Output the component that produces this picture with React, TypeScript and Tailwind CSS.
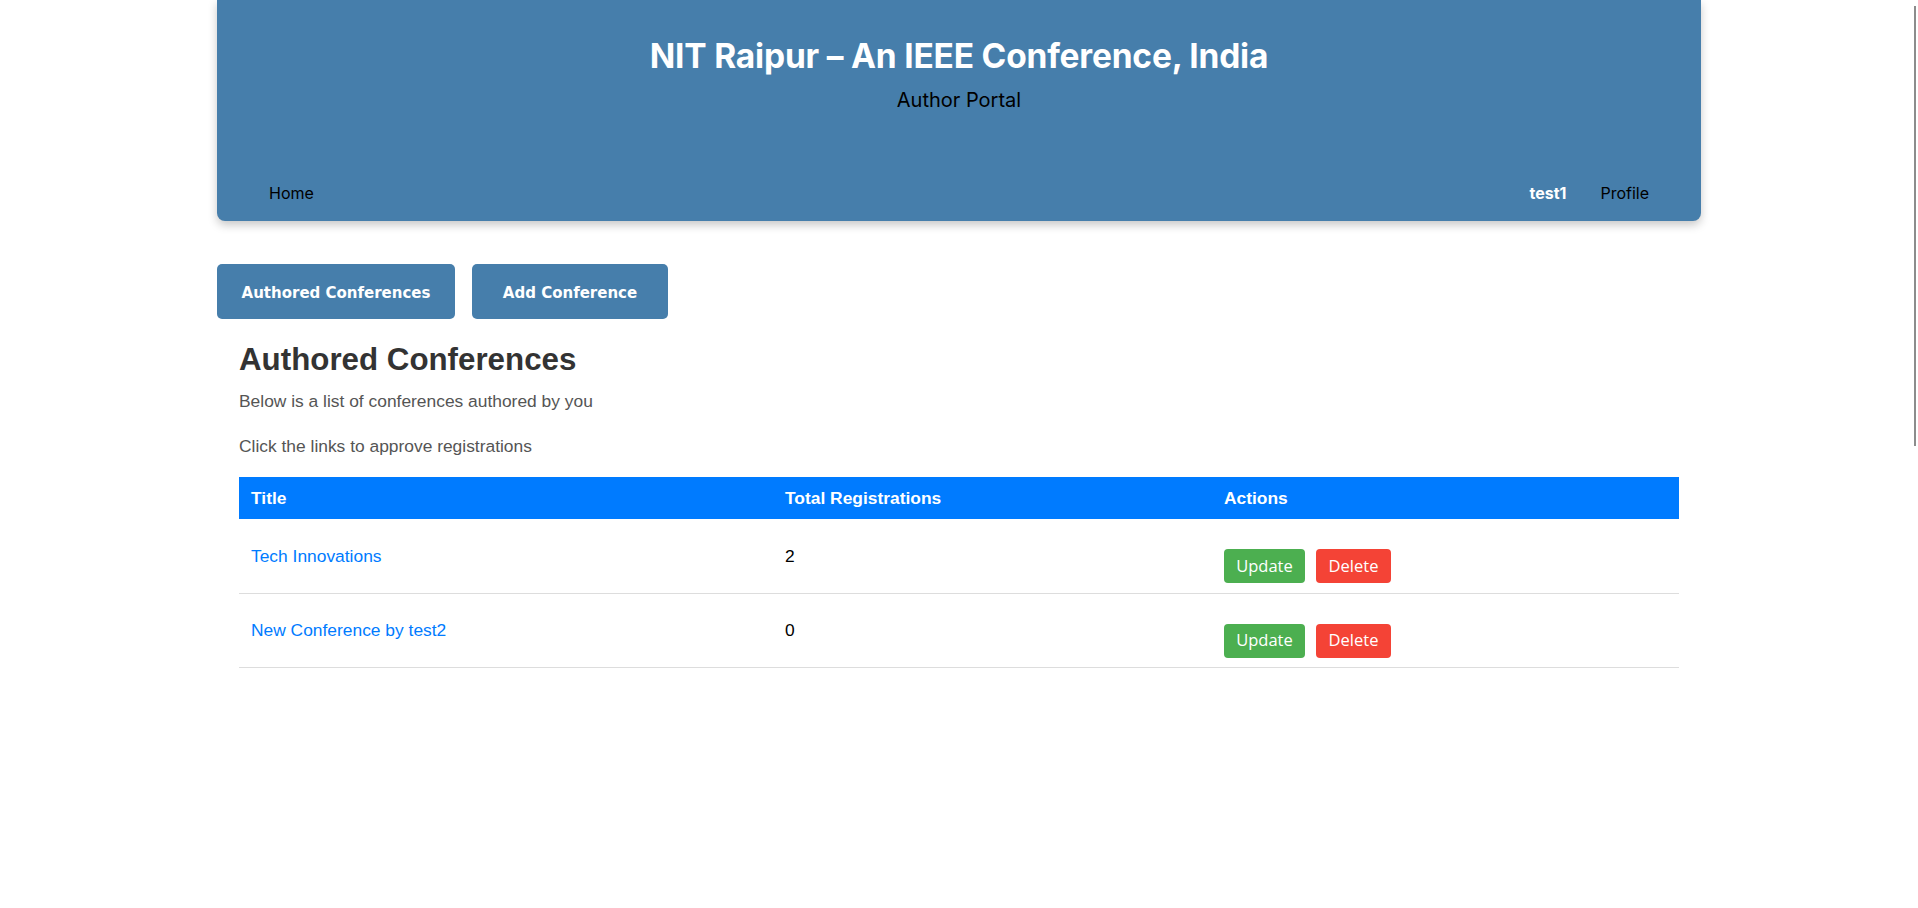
import React from "react";

const rows = [
  { title: "Tech Innovations", total: 2 },
  { title: "New Conference by test2", total: 0 },
];

export default function App() {
  return (
    <div className="min-h-[908px] w-full bg-white">
      <div className="fixed right-[2px] top-[6px] h-[440px] w-[2px] bg-[#8c8c8c]" />
      <header className="mx-auto flex h-[221px] w-[1484px] flex-col rounded-b-[8px] bg-[#467eab] shadow-[0_4px_10px_rgba(0,0,0,0.22)] [font-family:Inter,'Noto_Sans',sans-serif]">
        <h1 className="mt-[36px] text-center text-[33.5px] font-bold leading-[40px] tracking-[-0.2px] text-white">
          NIT Raipur – An IEEE Conference, India
        </h1>
        <p className="mt-[10px] text-center text-[20px] leading-[28px] text-black">
          Author Portal
        </p>
        <nav className="mt-auto mb-[16px] flex items-center px-[52px] text-[16px] leading-[24px]">
          <a className="text-black">Home</a>
          <div className="ml-auto flex items-center gap-[34px]">
            <span className="font-bold text-white">test1</span>
            <a className="text-black">Profile</a>
          </div>
        </nav>
      </header>

      <main className="mx-auto mt-[43px] w-[1484px]">
        <div className="flex gap-[17px] [font-family:'DejaVu_Sans',sans-serif]">
          <button className="flex h-[55px] w-[238px] items-center justify-center rounded-[5px] bg-[#467eab] pt-[3px] text-[15px] font-bold text-white">
            Authored Conferences
          </button>
          <button className="flex h-[55px] w-[196px] items-center justify-center rounded-[5px] bg-[#467eab] pt-[3px] text-[15px] font-bold text-white">
            Add Conference
          </button>
        </div>

        <section className="px-[22px] [font-family:'Liberation_Sans',Arial,sans-serif]">
          <h2 className="mt-[24px] text-[31.3px] font-bold leading-[34px] text-[#333]">
            Authored Conferences
          </h2>
          <p className="mt-[12px] text-[17.4px] leading-[24px] text-[#555]">
            Below is a list of conferences authored by you
          </p>
          <p className="mt-[21px] text-[17.4px] leading-[24px] text-[#555]">
            Click the links to approve registrations
          </p>

          <table className="mt-[19px] w-full border-collapse text-left text-[17.4px]">
            <thead>
              <tr className="h-[42px] bg-[#007bff] text-white">
                <th className="w-[534px] px-[12px] font-bold">Title</th>
                <th className="w-[439px] px-[12px] font-bold">Total Registrations</th>
                <th className="px-[12px] font-bold">Actions</th>
              </tr>
            </thead>
            <tbody>
              {rows.map((r) => (
                <tr key={r.title} className="h-[74px] border-b border-[#ddd]">
                  <td className="px-[12px] align-middle">
                    <a className="text-[#007bff]">{r.title}</a>
                  </td>
                  <td className="px-[12px] align-middle text-black">{r.total}</td>
                  <td className="px-[12px] pt-[30px] pb-[9px] align-top">
                    <div className="flex gap-[11px] [font-family:'Open_Sans',sans-serif]">
                      <button className="flex h-[34px] w-[81px] items-center justify-center rounded-[4px] bg-[#4caf50] text-[16.5px] text-white">
                        Update
                      </button>
                      <button className="flex h-[34px] w-[75px] items-center justify-center rounded-[4px] bg-[#f44336] text-[16.5px] text-white">
                        Delete
                      </button>
                    </div>
                  </td>
                </tr>
              ))}
            </tbody>
          </table>
        </section>
      </main>
    </div>
  );
}
